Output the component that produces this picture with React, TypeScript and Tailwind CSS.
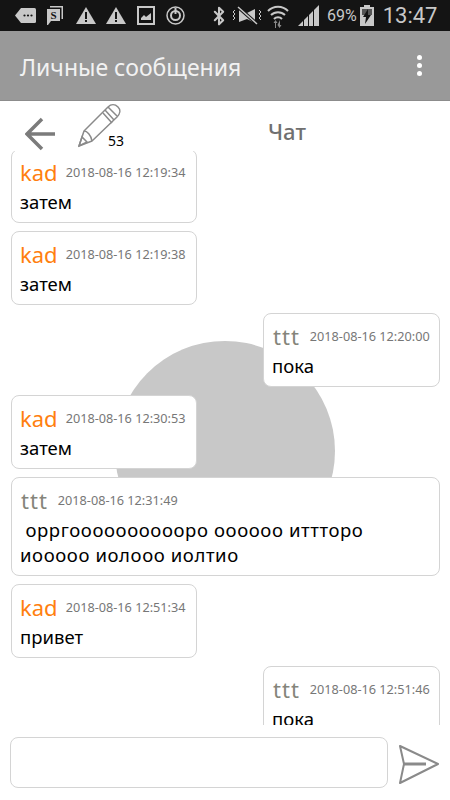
import React from 'react';
import { Bluetooth } from 'lucide-react';

type Message = {
  author: string;
  time: string;
  text: string;
  mine?: boolean;
  wide?: boolean;
};

const messages: Message[] = [
  { author: 'kad', time: '2018-08-16 12:19:34', text: 'затем' },
  { author: 'kad', time: '2018-08-16 12:19:38', text: 'затем' },
  { author: 'ttt', time: '2018-08-16 12:20:00', text: 'пока', mine: true },
  { author: 'kad', time: '2018-08-16 12:30:53', text: 'затем' },
  {
    author: 'ttt',
    time: '2018-08-16 12:31:49',
    text: ' орргооооооооооро оооооо иттторо иооооо иолооо иолтио',
    wide: true,
  },
  { author: 'kad', time: '2018-08-16 12:51:34', text: 'привет' },
  { author: 'ttt', time: '2018-08-16 12:51:46', text: 'пока', mine: true },
];

const StatusBar = () => (
  <div className="flex h-[31px] items-center bg-[#141414] pl-[15px] text-[#c8c8c8]">
    <svg width="21" height="15" viewBox="0 0 21 15" className="mr-[11px]">
      <path d="M6 0h13.500a1.500 1.500 0 0 1 1.500 1.500v12a1.500 1.500 0 0 1-1.500 1.500H6L0 7.500z" fill="#c8c8c8" />
      <circle cx="9.500" cy="7.500" r="1.100" fill="#141414" />
      <circle cx="13" cy="7.500" r="1.100" fill="#141414" />
      <circle cx="16.500" cy="7.500" r="1.100" fill="#141414" />
    </svg>
    <svg width="16" height="19" viewBox="0 0 16 19" className="mr-[13px]">
      <path d="M3 0h13v13h-1.500V1.500H3z" fill="#c8c8c8" />
      <path d="M0 3h13v12H4l-3 4H0z" fill="#c8c8c8" />
      <text x="6.500" y="13" fontSize="11" fontWeight="700" textAnchor="middle" fill="#141414" fontFamily="Liberation Serif, serif">S</text>
    </svg>
    <svg width="20" height="17" viewBox="0 0 20 17" className="mr-[10px]">
      <path d="M10 0l10 17H0z" fill="#c8c8c8" />
      <path d="M9 5h2v7H9zM9 13h2v2H9z" fill="#141414" />
    </svg>
    <svg width="20" height="17" viewBox="0 0 20 17" className="mr-[11px]">
      <path d="M10 0l10 17H0z" fill="#c8c8c8" />
      <path d="M9 5h2v7H9zM9 13h2v2H9z" fill="#141414" />
    </svg>
    <svg width="18" height="19" viewBox="0 0 18 19" className="mr-[11px]">
      <rect x="1" y="1" width="16" height="17" fill="none" stroke="#c8c8c8" strokeWidth="2" />
      <path d="M4 14v-2l3-3 2 2 5-4v7z" fill="#c8c8c8" />
    </svg>
    <svg width="19" height="19" viewBox="0 0 19 19" className="mr-[24px]">
      <circle cx="9.500" cy="9.500" r="8.500" fill="none" stroke="#c8c8c8" strokeWidth="1.500" />
      <circle cx="9.500" cy="9.500" r="4.500" fill="none" stroke="#c8c8c8" strokeWidth="2" />
      <path d="M9.500 2v6" stroke="#c8c8c8" strokeWidth="2" />
    </svg>
    <Bluetooth size={20} strokeWidth={2.500} className="mr-[3px]" />
    <svg width="30" height="20" viewBox="0 0 30 20" className="mr-[5px]">
      <path d="M7 4l8 3 8-4v14l-8-4-8 3z" fill="#c8c8c8" />
      <path d="M6 1l19 17" stroke="#141414" strokeWidth="3.500" />
      <path d="M6 1l19 17" stroke="#c8c8c8" strokeWidth="1.500" />
      <path d="M3 4l-2 2 2 2-2 2 2 2 -2 2M27 4l2 2-2 2 2 2-2 2 2 2" fill="none" stroke="#c8c8c8" strokeWidth="1" />
    </svg>
    <svg width="22" height="24" viewBox="0 0 22 24" className="mr-[9px]">
      <path d="M1 7a14 14 0 0 1 20 0M4 11a10 10 0 0 1 14 0M7 15a5.500 5.500 0 0 1 8 0" fill="none" stroke="#c8c8c8" strokeWidth="2" />
      <path d="M8 24v-5H6.500L8.500 16l2 3H9v5zM13 16v5h1.500l-2 3-2-3" fill="#8a8a8a" />
    </svg>
    <svg width="21" height="21" viewBox="0 0 21 21" className="mr-[8px]">
      <path d="M0 21l21-21v21z" fill="#c8c8c8" />
      <path d="M5.500 21V15M10.500 21V10M15.500 21V5" stroke="#141414" strokeWidth="1" />
    </svg>
    <span className="mr-[3px] font-['Roboto',sans-serif] text-[16px] leading-none">69%</span>
    <svg width="14" height="21" viewBox="0 0 14 21" className="mr-[9px]">
      <path d="M4 0h6v2h4v19H0V2h4z" fill="#c8c8c8" />
      <path d="M2 4h10v6H2z" fill="#555" />
      <path d="M8 4L3 12h3l-1 7 6-9H8z" fill="#141414" />
    </svg>
    <span className="font-['Roboto',sans-serif] text-[22px] leading-none">13:47</span>
  </div>
);

const Bubble = ({ message }: { message: Message }) => (
  <div
    className={`rounded-lg border border-[#d4d4d4] bg-white pb-[8px] pl-[8px] ${
      message.mine ? 'ml-auto w-[177px]' : message.wide ? 'w-full' : 'w-[186px]'
    }`}
  >
    <div className="flex h-[39px] items-center whitespace-nowrap pt-[5px]">
      <span
        className={`text-[22px] leading-none ${
          message.author === 'kad' ? 'mr-[8px] text-[#ff7f0e]' : 'mr-[10px] ml-[1px] tracking-[1px] text-[#85857a]'
        }`}
      >
        {message.author}
      </span>
      <span className="text-[12.7px] leading-none text-[#777]">{message.time}</span>
    </div>
    <p
      className={`whitespace-pre-wrap text-[18.5px] leading-[25px] text-black ${
        message.wide ? 'pr-[50px] tracking-[0.6px]' : ''
      }`}
    >
      {message.text}
    </p>
  </div>
);

export default function App() {
  return (
    <div className="flex h-[800px] w-[450px] flex-col overflow-hidden bg-white font-['Noto_Sans',sans-serif]">
      <StatusBar />

      <div className="flex h-[70px] items-center justify-between border-b border-[#8c8c8c] bg-[#999999] pl-[20px] pr-[28px] pt-[3px]">
        <h1 className="text-[23px] font-normal text-[#f2f2f2]">Личные сообщения</h1>
        <div className="mb-[3px] flex flex-col gap-[3px]">
          <span className="h-[5px] w-[5px] rounded-full bg-white" />
          <span className="h-[5px] w-[5px] rounded-full bg-white" />
          <span className="h-[5px] w-[5px] rounded-full bg-white" />
        </div>
      </div>

      <div className="relative flex h-[50px] items-start pl-[25px]">
        <svg width="30" height="34" viewBox="0 0 30 34" fill="none" stroke="#7b7b7b" strokeWidth="3.500" className="mt-[16px]">
          <path d="M17 2L2 17l15 15M2 17h28" />
        </svg>
        <div className="relative ml-[23px] mt-[3px]">
          <svg width="43" height="44" viewBox="0 0 43 44" fill="none" stroke="#8a8a8a" strokeWidth="1.500">
            <path d="M1 42l5-15L30 3c3-3 7-3 10 0s2 7-1 10L14 37z" strokeLinejoin="round" />
            <path d="M6 27c3 0 7 4 8 10M1 42l3-9 5 5zM27 6l9 10M25 9l9 10M30 3l9 9" />
          </svg>
          <span className="absolute left-[30px] top-[30px] text-[14px] leading-none text-black">53</span>
        </div>
        <span className="absolute left-[268px] top-[19px] text-[22px] font-medium leading-none text-[#707070]">Чат</span>
      </div>

      <div className="relative h-[574px] overflow-hidden">
        <div className="absolute left-[115px] top-[190px] h-[220px] w-[220px] rounded-full bg-[#c8c8c8]" />
        <div className="relative mt-[-2px] flex flex-col gap-[8px] pl-[11px] pr-[10px]">
          {messages.map((message) => (
            <Bubble key={message.time} message={message} />
          ))}
        </div>
      </div>

      <div className="flex flex-1 items-start pl-[10px] pt-[12px]">
        <div className="h-[51px] w-[378px] rounded-lg border border-[#d4d4d4] bg-white" />
        <svg width="42" height="40" viewBox="0 0 42 40" fill="none" stroke="#8a8a8a" strokeWidth="2" className="ml-[11px] mt-[8px]" strokeLinejoin="round">
          <path d="M1 1l38 18L1 38l4-19z" />
          <path d="M5 19h22" strokeWidth="3" />
        </svg>
      </div>
    </div>
  );
}
